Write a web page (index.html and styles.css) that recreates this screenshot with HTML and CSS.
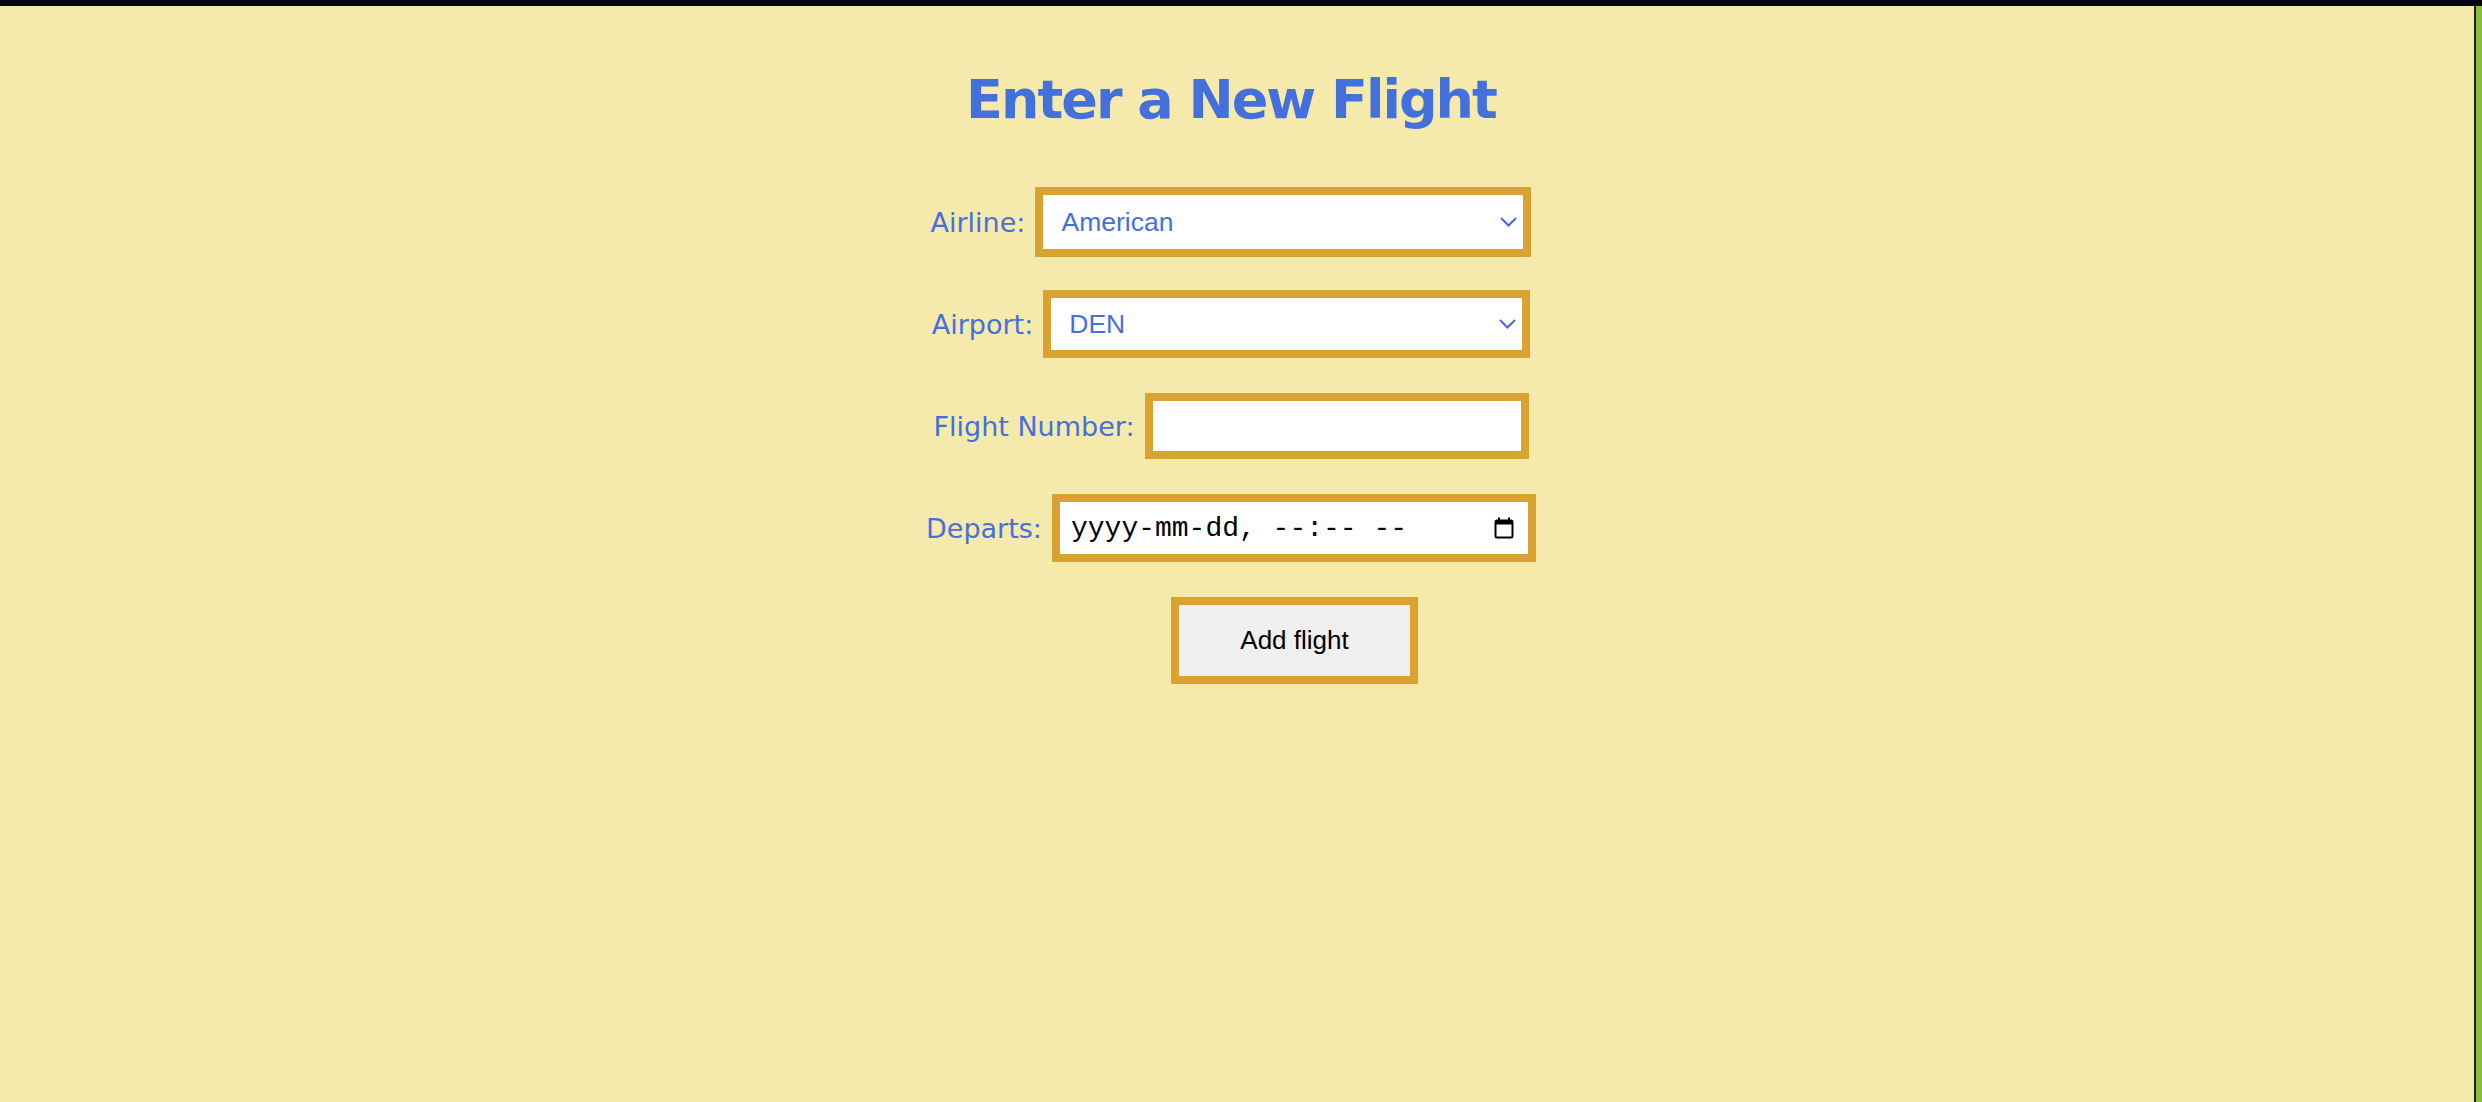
FILE: index.html
```html
<!DOCTYPE html>
<html lang="en">
<head>
<meta charset="utf-8">
<title>Enter a New Flight</title>
<link rel="stylesheet" href="styles.css">
</head>
<body>
<div class="window">
  <div class="topbar"></div>
  <div class="frame">
    <main class="page">
      <h1 class="title">Enter a New Flight</h1>
      <form class="flight-form">
        <div class="row">
          <label class="label" for="airline">Airline:</label>
          <div class="select-wrap select-airline">
            <select id="airline" class="select">
              <option>American</option>
              <option>Delta</option>
              <option>United</option>
            </select>
            <svg class="chevron" width="17" height="10" viewBox="0 0 17 10"><path d="M1 1 L8.5 8.5 L16 1" fill="none" stroke="#4169e1" stroke-width="2"/></svg>
          </div>
        </div>
        <div class="row">
          <label class="label" for="airport">Airport:</label>
          <div class="select-wrap select-airport">
            <select id="airport" class="select">
              <option>DEN</option>
              <option>LAX</option>
              <option>ORD</option>
            </select>
            <svg class="chevron" width="17" height="10" viewBox="0 0 17 10"><path d="M1 1 L8.5 8.5 L16 1" fill="none" stroke="#4169e1" stroke-width="2"/></svg>
          </div>
        </div>
        <div class="row">
          <label class="label" for="number">Flight Number:</label>
          <input id="number" class="text-input" type="text">
        </div>
        <div class="row">
          <label class="label" for="departs">Departs:</label>
          <div class="date-input" id="departs">
            <span class="date-text">yyyy-mm-dd, --:-- --</span>
            <svg class="cal" width="20" height="22" viewBox="0 0 20 22"><rect x="1.5" y="3.5" width="17" height="17" rx="1.5" fill="none" stroke="#000" stroke-width="2"/><rect x="1.5" y="3.5" width="17" height="4" fill="#000"/><rect x="4" y="0.5" width="2" height="4" fill="#000"/><rect x="14" y="0.5" width="2" height="4" fill="#000"/></svg>
          </div>
        </div>
        <div class="actions">
          <button type="button" class="button">Add flight</button>
        </div>
      </form>
    </main>
    <div class="edge"></div>
  </div>
</div>
</body>
</html>
```

FILE: styles.css
```css
html, body {
  margin: 0;
  padding: 0;
  height: 100%;
}

body {
  background: #f5e9ab;
}

.window {
  display: flex;
  flex-direction: column;
  height: 100vh;
}

.topbar {
  height: 6px;
  background: #050505;
  flex: none;
}

.frame {
  flex: 1;
  display: flex;
  min-height: 0;
}

.page {
  flex: 1;
  background: #f5e9ab;
  display: flex;
  flex-direction: column;
  align-items: center;
  padding-right: 12px;
}

.edge {
  width: 6px;
  flex: none;
  background: #8abd3b;
  border-left: 2px solid #1b1b26;
}

.title {
  margin: 62px 0 39px 0;
  font-family: "DejaVu Sans", sans-serif;
  font-weight: bold;
  font-size: 54px;
  line-height: 64px;
  letter-spacing: -2px;
  color: #4470dc;
}

.flight-form {
  display: flex;
  flex-direction: column;
  align-items: center;
}

.row {
  height: 102px;
  display: flex;
  align-items: center;
  gap: 10px;
}

.label {
  font-family: "DejaVu Sans", sans-serif;
  font-size: 27px;
  color: #4470dc;
}

.select-wrap {
  position: relative;
  display: flex;
}

.select {
  appearance: none;
  -webkit-appearance: none;
  box-sizing: border-box;
  width: 100%;
  height: 70px;
  border: 8px solid #daa331;
  border-radius: 0;
  background: #fff;
  padding: 0 0 0 18px;
  margin: 0;
  font-family: "Liberation Sans", Arial, sans-serif;
  font-size: 26.5px;
  color: #4470dc;
  outline: none;
}

.select-airline {
  width: 496px;
}

.select-airport {
  width: 487px;
}

.select-airport .select {
  height: 68px;
}

.chevron {
  position: absolute;
  right: 14px;
  top: 50%;
  margin-top: -5px;
  pointer-events: none;
}

.text-input {
  box-sizing: border-box;
  width: 384px;
  height: 66px;
  border: 8px solid #daa331;
  border-radius: 0;
  background: #fff;
  margin: 0;
  padding: 0 12px;
  font-family: "Liberation Sans", Arial, sans-serif;
  font-size: 26px;
  outline: none;
}

.date-input {
  box-sizing: border-box;
  width: 484px;
  height: 68px;
  border: 8px solid #daa331;
  background: #fff;
  display: flex;
  align-items: center;
  justify-content: space-between;
  padding: 0 14px 0 11px;
}

.date-text {
  font-family: "Liberation Mono", "Courier New", monospace;
  font-size: 28px;
  color: #000;
  white-space: pre;
}

.cal {
  display: block;
}

.actions {
  margin-top: 18px;
  margin-left: 127px;
}

.button {
  box-sizing: border-box;
  width: 247px;
  height: 87px;
  border: 8px solid #daa331;
  border-radius: 0;
  background: #efefef;
  margin: 0;
  padding: 0;
  font-family: "Liberation Sans", Arial, sans-serif;
  font-size: 26px;
  color: #000;
  cursor: pointer;
}
```
